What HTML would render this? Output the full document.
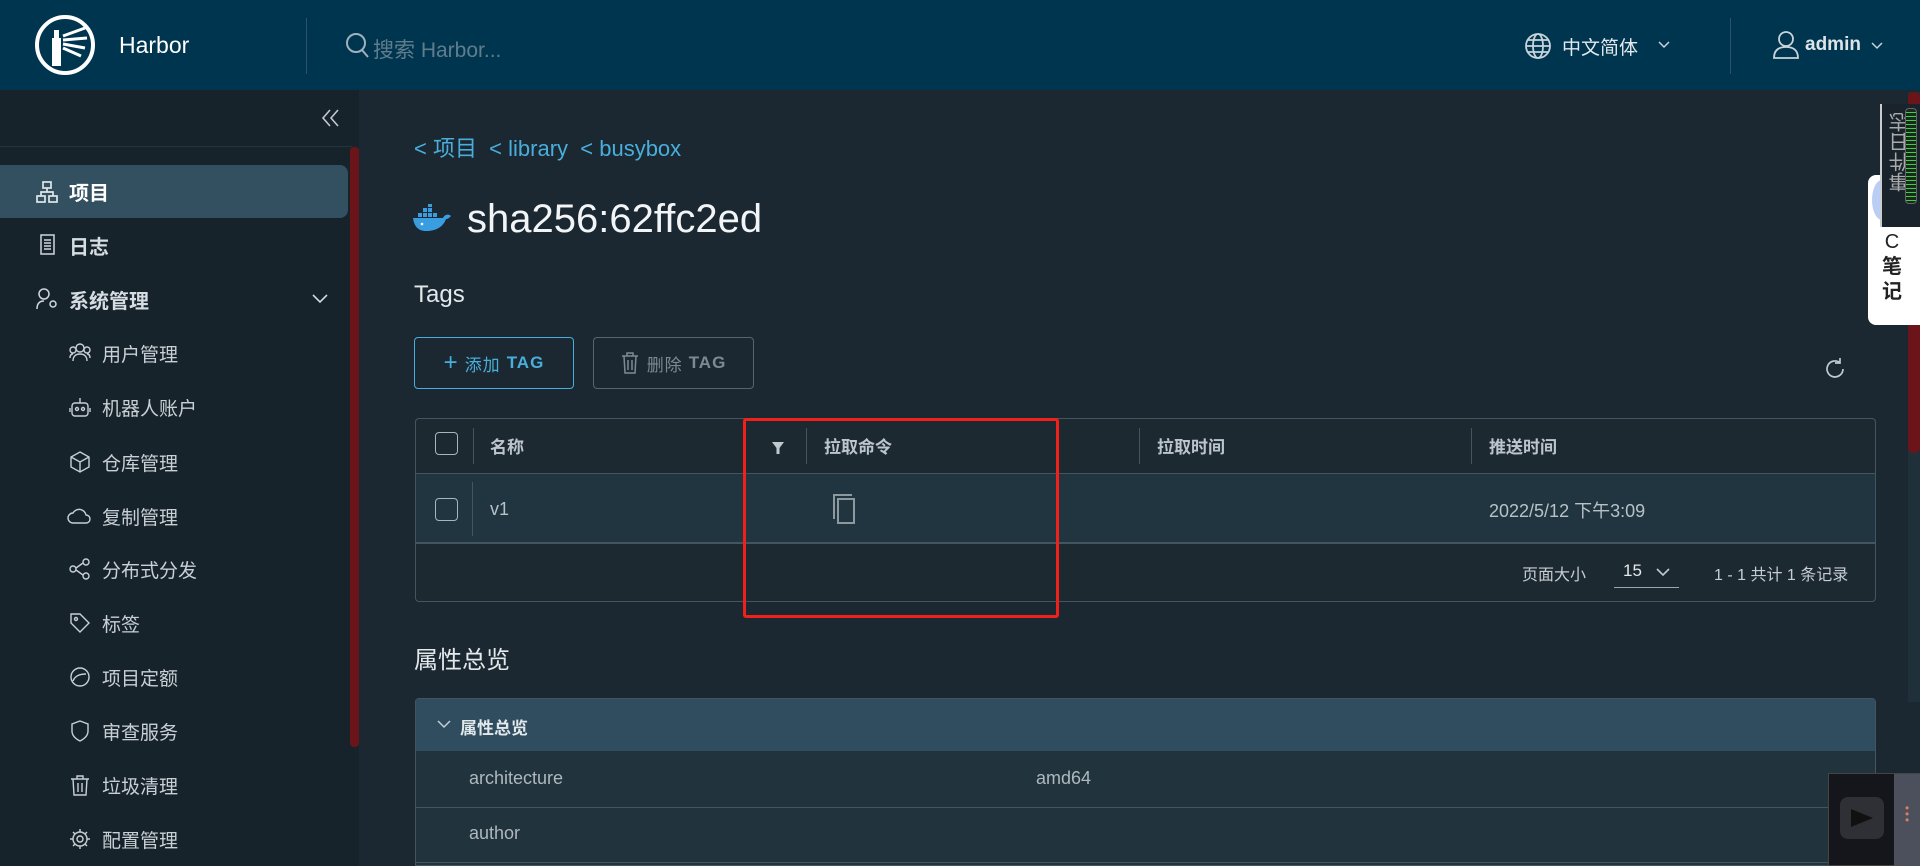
<!DOCTYPE html>
<html><head><meta charset="utf-8">
<style>
*{box-sizing:border-box;margin:0;padding:0}
body{width:1920px;height:866px;overflow:hidden;background:#1b2831;font-family:"Liberation Sans","Noto Sans CJK SC",sans-serif;color:#c6cdd2;position:relative}
.abs{position:absolute}
.hdr{left:0;top:0;width:1920px;height:90px;background:#003550}
.side{left:0;top:90px;width:359px;height:776px;background:#17232b}
.mi{position:absolute;left:0;width:348px;height:50px;display:flex;align-items:center;font-size:20px;color:#d6dde2}
.mi svg{position:absolute}
.top{font-weight:bold}
.sub{font-size:19px;color:#c8d0d5}
.bc{color:#49aedb;font-size:22px}
.th{font-size:17px;font-weight:bold;color:#bcc5cb}
.cb{width:23px;height:23px;border:1.5px solid #aab4ba;border-radius:4px}
</style></head><body>
<div class="abs hdr">
 <svg class="abs" style="left:34px;top:14px" width="62" height="62" viewBox="0 0 62 62"><circle cx="31" cy="31" r="28" fill="none" stroke="#fff" stroke-width="4"/><path d="M18 24h9v28h-9z" fill="#fff"/><path d="M20 16h5v8h-5z" fill="#fff"/><path d="M29 22l22-8M29 26l24-2M29 30l22 4M29 34l18 8" stroke="#fff" stroke-width="3"/></svg>
 <div class="abs" style="left:119px;top:32px;font-size:23px;color:#fff">Harbor</div>
 <div class="abs" style="left:306px;top:18px;width:1px;height:56px;background:#2c5168"></div>
 <svg class="abs" style="left:345px;top:32px" width="26" height="28"><circle cx="11" cy="11" r="9" fill="none" stroke="#9fb2bd" stroke-width="2"/><path d="M17 18l6 7" stroke="#9fb2bd" stroke-width="2"/></svg>
 <div class="abs" style="left:373px;top:34px;font-size:21px;color:#5f7d8d">搜索 Harbor...</div>
 <svg class="abs" style="left:1524px;top:32px" width="28" height="28" viewBox="0 0 28 28" fill="none" stroke="#c8d3da" stroke-width="1.8"><circle cx="14" cy="14" r="12"/><ellipse cx="14" cy="14" rx="5" ry="12"/><path d="M2 14h24M4 8h20M4 20h20"/></svg>
 <div class="abs" style="left:1562px;top:33px;font-size:19px;color:#e3e9ec">中文简体</div>
 <svg class="abs" style="left:1657px;top:40px" width="14" height="10"><path d="M2 2l5 5 5-5" stroke="#c8d3da" fill="none" stroke-width="1.5"/></svg>
 <div class="abs" style="left:1730px;top:18px;width:1px;height:56px;background:#2c5168"></div>
 <svg class="abs" style="left:1772px;top:30px" width="28" height="30" fill="none" stroke="#c8d3da" stroke-width="1.8"><circle cx="14" cy="9" r="7"/><path d="M2 28c0-8 5-11 12-11s12 3 12 11z"/></svg>
 <div class="abs" style="left:1805px;top:34px;font-size:19px;font-weight:bold;color:#dce4e8">admin</div>
 <svg class="abs" style="left:1871px;top:42px" width="12" height="8"><path d="M1 1l5 5 5-5" stroke="#c8d3da" fill="none" stroke-width="1.5"/></svg>
</div>
<div class="abs side">
 <svg class="abs" style="left:321px;top:18px" width="20" height="20" fill="none" stroke="#c0c9ce" stroke-width="1.6"><path d="M9 2L2 10l7 8M17 2l-7 8 7 8"/></svg>
 <div class="abs" style="left:0;top:56px;width:352px;height:1px;background:#25333c"></div>
 <div class="abs" style="left:350px;top:57px;width:9px;height:600px;background:#6b1419;border-radius:4px"></div>
</div>
<div class="mi top" style="top:165px;height:53px;background:#32505f;border-radius:0 8px 8px 0"><svg style="left:36px;top:16px" width="22" height="22" fill="none" stroke="#dfe6ea" stroke-width="1.7"><rect x="7" y="1" width="8" height="6"/><rect x="1" y="15" width="8" height="6"/><rect x="13" y="15" width="8" height="6"/><path d="M11 7v4M5 15v-4h12v4"/></svg><span style="margin-left:69px;color:#fff">项目</span></div>
<div class="mi top" style="top:220px"><svg style="left:40px;top:14px" width="16" height="22" fill="none" stroke="#cfd7dc" stroke-width="1.5"><rect x="1" y="1" width="13" height="19"/><path d="M4 6h7M4 9h7M4 12h7M4 15h7"/></svg><span style="margin-left:69px">日志</span></div>
<div class="mi top" style="top:274px"><svg style="left:36px;top:14px" width="22" height="22" fill="none" stroke="#cfd7dc" stroke-width="1.5"><circle cx="8" cy="6" r="5"/><path d="M1 21c0-6 3-8 7-8M14 16a3 3 0 1 0 6 0a3 3 0 1 0-6 0"/></svg><span style="margin-left:69px">系统管理</span><svg style="left:312px;top:20px" width="16" height="10"><path d="M1 1l7 7 7-7" stroke="#cfd7dc" fill="none" stroke-width="1.6"/></svg></div>
<div class="mi sub" style="top:328px"><svg style="left:69px;top:14px" width="22" height="20" fill="none" stroke="#c8d0d5" stroke-width="1.4"><circle cx="11" cy="6" r="4"/><circle cx="4" cy="8" r="3"/><circle cx="18" cy="8" r="3"/><path d="M4 19c0-5 3-7 7-7s7 2 7 7M1 16c0-3 1-4 3-4M21 16c0-3-1-4-3-4"/></svg><span style="margin-left:102px">用户管理</span></div>
<div class="mi sub" style="top:382px"><svg style="left:69px;top:14px" width="22" height="22" fill="none" stroke="#c8d0d5" stroke-width="1.4"><rect x="3" y="7" width="16" height="13" rx="3"/><circle cx="8" cy="13" r="1.5"/><circle cx="14" cy="13" r="1.5"/><path d="M11 7V2M1 12v4M21 12v4"/></svg><span style="margin-left:102px">机器人账户</span></div>
<div class="mi sub" style="top:437px"><svg style="left:69px;top:14px" width="22" height="22" fill="none" stroke="#c8d0d5" stroke-width="1.4"><path d="M11 1l9 5v10l-9 5-9-5V6zM2 6l9 5 9-5M11 11v10"/></svg><span style="margin-left:102px">仓库管理</span></div>
<div class="mi sub" style="top:491px"><svg style="left:67px;top:15px" width="24" height="20" fill="none" stroke="#c8d0d5" stroke-width="1.4"><path d="M6 17a5 5 0 0 1 0-10 7 7 0 0 1 13 2 4 4 0 0 1 0 8z"/></svg><span style="margin-left:102px">复制管理</span></div>
<div class="mi sub" style="top:544px"><svg style="left:69px;top:14px" width="22" height="22" fill="none" stroke="#c8d0d5" stroke-width="1.4"><circle cx="4" cy="11" r="3"/><circle cx="17" cy="4" r="3"/><circle cx="17" cy="18" r="3"/><path d="M7 10l7-5M7 12l7 5"/></svg><span style="margin-left:102px">分布式分发</span></div>
<div class="mi sub" style="top:598px"><svg style="left:69px;top:14px" width="22" height="22" fill="none" stroke="#c8d0d5" stroke-width="1.4"><path d="M2 2h9l9 9-9 9-9-9z"/><circle cx="7" cy="7" r="1.5"/></svg><span style="margin-left:102px">标签</span></div>
<div class="mi sub" style="top:652px"><svg style="left:69px;top:14px" width="22" height="22" fill="none" stroke="#c8d0d5" stroke-width="1.4"><circle cx="11" cy="11" r="9"/><path d="M4 15c2-5 6-7 13-7"/></svg><span style="margin-left:102px">项目定额</span></div>
<div class="mi sub" style="top:706px"><svg style="left:69px;top:14px" width="22" height="22" fill="none" stroke="#c8d0d5" stroke-width="1.4"><path d="M11 1l8 3v7c0 5-4 8-8 10-4-2-8-5-8-10V4z"/></svg><span style="margin-left:102px">审查服务</span></div>
<div class="mi sub" style="top:760px"><svg style="left:69px;top:14px" width="22" height="22" fill="none" stroke="#c8d0d5" stroke-width="1.4"><path d="M2 5h18M8 5V2h6v3M4 5l1 16h12l1-16M9 9v9M13 9v9"/></svg><span style="margin-left:102px">垃圾清理</span></div>
<div class="mi sub" style="top:814px"><svg style="left:69px;top:14px" width="22" height="22" fill="none" stroke="#c8d0d5" stroke-width="1.4"><circle cx="11" cy="11" r="3"/><path d="M11 1v3M11 18v3M1 11h3M18 11h3M4 4l2 2M16 16l2 2M4 18l2-2M16 6l2-2"/><circle cx="11" cy="11" r="7"/></svg><span style="margin-left:102px">配置管理</span></div>

<div class="abs bc" style="left:414px;top:131px">&lt; 项目&nbsp;&nbsp;&lt; library&nbsp;&nbsp;&lt; busybox</div>
<svg class="abs" style="left:412px;top:204px" width="40" height="30" viewBox="0 0 40 30"><path d="M1 14h30c2-4 6-4 8-2-2 2-3 3-5 3-3 8-10 12-20 12C6 27 2 22 1 14z" fill="#3a9de0"/><g fill="#3a9de0"><rect x="6" y="9" width="4" height="4"/><rect x="11" y="9" width="4" height="4"/><rect x="16" y="9" width="4" height="4"/><rect x="21" y="9" width="4" height="4"/><rect x="11" y="4" width="4" height="4"/><rect x="16" y="4" width="4" height="4"/><rect x="16" y="0" width="4" height="3"/></g><circle cx="10" cy="20" r="1.3" fill="#fff"/></svg>
<div class="abs" style="left:467px;top:197px;font-size:40px;color:#f2f5f7">sha256:62ffc2ed</div>
<div class="abs" style="left:414px;top:281px;font-size:24px;color:#e3e8eb">Tags</div>
<div class="abs" style="left:414px;top:337px;width:160px;height:52px;border:1.5px solid #49aedb;border-radius:4px;color:#49aedb;font-size:17px;display:flex;align-items:center;justify-content:center;letter-spacing:1px"><span style="font-size:24px;margin-right:6px;font-weight:300">+</span>添加 <b style="margin-left:6px">TAG</b></div>
<div class="abs" style="left:593px;top:337px;width:161px;height:52px;border:1.5px solid #55656f;border-radius:4px;color:#7c8a93;font-size:17px;display:flex;align-items:center;justify-content:center;letter-spacing:1px"><svg width="18" height="22" fill="none" stroke="#7c8a93" stroke-width="1.5" style="margin-right:8px"><path d="M1 4h16M6 4V1h6v3M3 4l1 17h10l1-17M7 8v10M11 8v10"/></svg>删除 <b style="margin-left:6px">TAG</b></div>
<svg class="abs" style="left:1823px;top:357px" width="24" height="24" fill="none" stroke="#c0c9ce" stroke-width="1.7"><path d="M20 12a8 8 0 1 1-3-6.3"/><path d="M17 1v5h-5"/></svg>

<div class="abs" style="left:415px;top:418px;width:1461px;height:184px;border:1px solid #45555f;border-radius:4px;background:#1c2931"></div>
<div class="abs" style="left:416px;top:473px;width:1459px;height:71px;background:#213540;border-top:1px solid #45555f;border-bottom:2px solid #45555f"></div>
<div class="abs cb" style="left:435px;top:432px"></div>
<div class="abs" style="left:473px;top:428px;width:1px;height:36px;background:#45555f"></div>
<div class="abs th" style="left:490px;top:433px">名称</div>
<svg class="abs" style="left:771px;top:441px" width="14" height="14"><path d="M1 1h12l-4.5 6v6h-3V7z" fill="#c0c9ce"/></svg>
<div class="abs" style="left:806px;top:428px;width:1px;height:36px;background:#45555f"></div>
<div class="abs th" style="left:824px;top:433px">拉取命令</div>
<div class="abs" style="left:1139px;top:428px;width:1px;height:36px;background:#45555f"></div>
<div class="abs th" style="left:1157px;top:433px">拉取时间</div>
<div class="abs" style="left:1471px;top:428px;width:1px;height:36px;background:#45555f"></div>
<div class="abs th" style="left:1489px;top:433px">推送时间</div>
<div class="abs cb" style="left:435px;top:498px"></div>
<div class="abs" style="left:472px;top:482px;width:1px;height:54px;background:#45555f"></div>
<div class="abs" style="left:490px;top:499px;font-size:18px;color:#b8c1c7">v1</div>
<svg class="abs" style="left:832px;top:493px" width="26" height="32" fill="none" stroke="#8d989f" stroke-width="2"><path d="M2 26V2h18"/><rect x="6" y="6" width="16" height="24"/></svg>
<div class="abs" style="left:1489px;top:497px;font-size:18px;color:#b8c1c7">2022/5/12 下午3:09</div>
<div class="abs" style="left:1522px;top:561px;font-size:16px;color:#c6cdd2">页面大小</div>
<div class="abs" style="left:1614px;top:558px;width:65px;height:30px;border-bottom:1.5px solid #9ba6ad;font-size:17px;color:#e3e8eb;padding-left:9px;padding-top:3px">15<svg style="position:absolute;left:42px;top:10px" width="14" height="9"><path d="M1 1l6 6 6-6" stroke="#c0c9ce" fill="none" stroke-width="1.6"/></svg></div>
<div class="abs" style="left:1714px;top:561px;font-size:16px;color:#c6cdd2">1 - 1 共计 1 条记录</div>
<div class="abs" style="left:743px;top:418px;width:316px;height:200px;border:3.5px solid #f0201a;border-radius:3px"></div>

<div class="abs" style="left:414px;top:640px;font-size:24px;color:#e3e8eb">属性总览</div>
<div class="abs" style="left:415px;top:698px;width:1461px;height:168px;border:1px solid #45555f;border-radius:4px 4px 0 0;background:#21333d"></div>
<div class="abs" style="left:416px;top:699px;width:1459px;height:52px;background:#2f4d5e"></div>
<svg class="abs" style="left:437px;top:720px" width="14" height="9"><path d="M1 1l6 6 6-6" stroke="#c8d0d5" fill="none" stroke-width="1.5"/></svg>
<div class="abs" style="left:460px;top:714px;font-size:17px;font-weight:bold;color:#e3e8eb">属性总览</div>
<div class="abs" style="left:469px;top:768px;font-size:18px;color:#aeb8be">architecture</div>
<div class="abs" style="left:1036px;top:768px;font-size:18px;color:#aeb8be">amd64</div>
<div class="abs" style="left:416px;top:807px;width:1459px;height:1px;background:#45555f"></div>
<div class="abs" style="left:469px;top:823px;font-size:18px;color:#aeb8be">author</div>
<div class="abs" style="left:416px;top:862px;width:1459px;height:1px;background:#45555f"></div>

<div class="abs" style="left:1908px;top:92px;width:12px;height:610px;background:#20303a"></div>
<div class="abs" style="left:1908px;top:92px;width:12px;height:361px;background:#6b1419;border-radius:5px"></div>
<div class="abs" style="left:1868px;top:175px;width:52px;height:150px;background:#fff;border-radius:8px 0 0 8px"></div>
<div class="abs" style="left:1872px;top:180px;width:20px;height:40px;border-radius:50%;background:#9cb8f0;opacity:.7"></div>
<div class="abs" style="left:1877px;top:230px;width:30px;font-size:20px;color:#222;text-align:center;line-height:25px">C<br><b>笔<br>记</b></div>
<div class="abs" style="left:1880px;top:104px;width:40px;height:123px;background:#18232b;border-left:2px solid #ccc"></div>
<div class="abs" style="left:1886px;top:112px;font-size:20px;color:#aaa;writing-mode:vertical-rl;transform:rotate(180deg)">事件日志</div>
<div class="abs" style="left:1905px;top:108px;width:12px;height:96px;border:1px solid #666;border-radius:4px;background:repeating-linear-gradient(#1a2a1a 0 3px,#3fcf4f 3px 4px)"></div>
<div class="abs" style="left:1828px;top:773px;width:92px;height:93px;background:#15161c;border:1px solid #444"></div>
<div class="abs" style="left:1894px;top:774px;width:26px;height:92px;background:#4c4f5c"></div>
<div class="abs" style="left:1905px;top:805px;color:#d48060;font-size:12px;line-height:6px">•<br>•<br>•</div>
<div class="abs" style="left:1840px;top:797px;width:44px;height:42px;background:#2f3035;border-radius:8px"></div>
<svg class="abs" style="left:1849px;top:807px" width="26" height="22"><path d="M2 2l22 9L2 20z" fill="#111"/></svg>
</body></html>
